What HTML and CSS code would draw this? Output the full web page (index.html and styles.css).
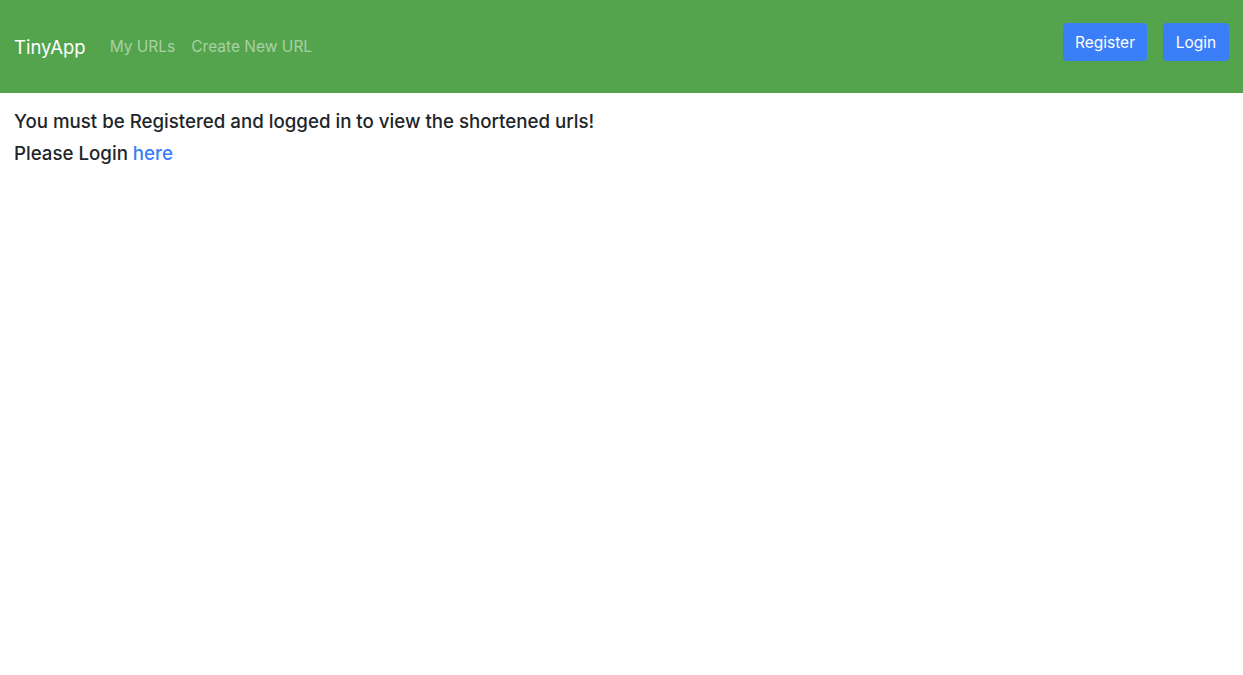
FILE: index.html
```html
<!DOCTYPE html>
<html lang="en">
<head>
<meta charset="utf-8">
<title>TinyApp</title>
<link rel="stylesheet" href="styles.css">
</head>
<body>
<nav class="navbar">
  <div class="nav-left">
    <a class="brand" href="#">TinyApp</a>
    <a class="nav-link" href="#">My URLs</a>
    <a class="nav-link" href="#">Create New URL</a>
  </div>
  <div class="nav-right">
    <button class="btn">Register</button>
    <button class="btn">Login</button>
  </div>
</nav>
<main class="content">
  <p class="msg">You must be Registered and logged in to view the shortened urls!</p>
  <p class="msg">Please Login <a class="link" href="#">here</a></p>
</main>
</body>
</html>
```
FILE: styles.css
```css
* { box-sizing: border-box; }
body {
  margin: 0;
  font-family: Inter, "Noto Sans", "Liberation Sans", sans-serif;
  color: #212529;
  background: #fff;
}
.navbar {
  height: 93px;
  background: #53a44d;
  display: flex;
  align-items: center;
  justify-content: space-between;
  padding: 0 14px;
}
.nav-left {
  display: flex;
  align-items: center;
}
.brand {
  color: #fff;
  font-size: 18.5px;
  text-decoration: none;
  margin-right: 24px;
}
.nav-link {
  color: rgba(255,255,255,0.5);
  font-size: 15.5px;
  text-decoration: none;
  margin-right: 16px;
}
.nav-right {
  display: flex;
  gap: 16px;
  padding-bottom: 9px;
}
.btn {
  font-family: inherit;
  background: #3a7ef8;
  color: #fff;
  border: none;
  border-radius: 4px;
  height: 38px;
  padding: 0 12px;
  font-size: 15.5px;
  min-width: 66px;
}
.content {
  padding: 13px 14px;
}
.msg {
  margin: 0;
  font-size: 18.7px;
  line-height: 32px;
  font-weight: 500;
}
.link {
  color: #3a7ef8;
  text-decoration: none;
}
```
